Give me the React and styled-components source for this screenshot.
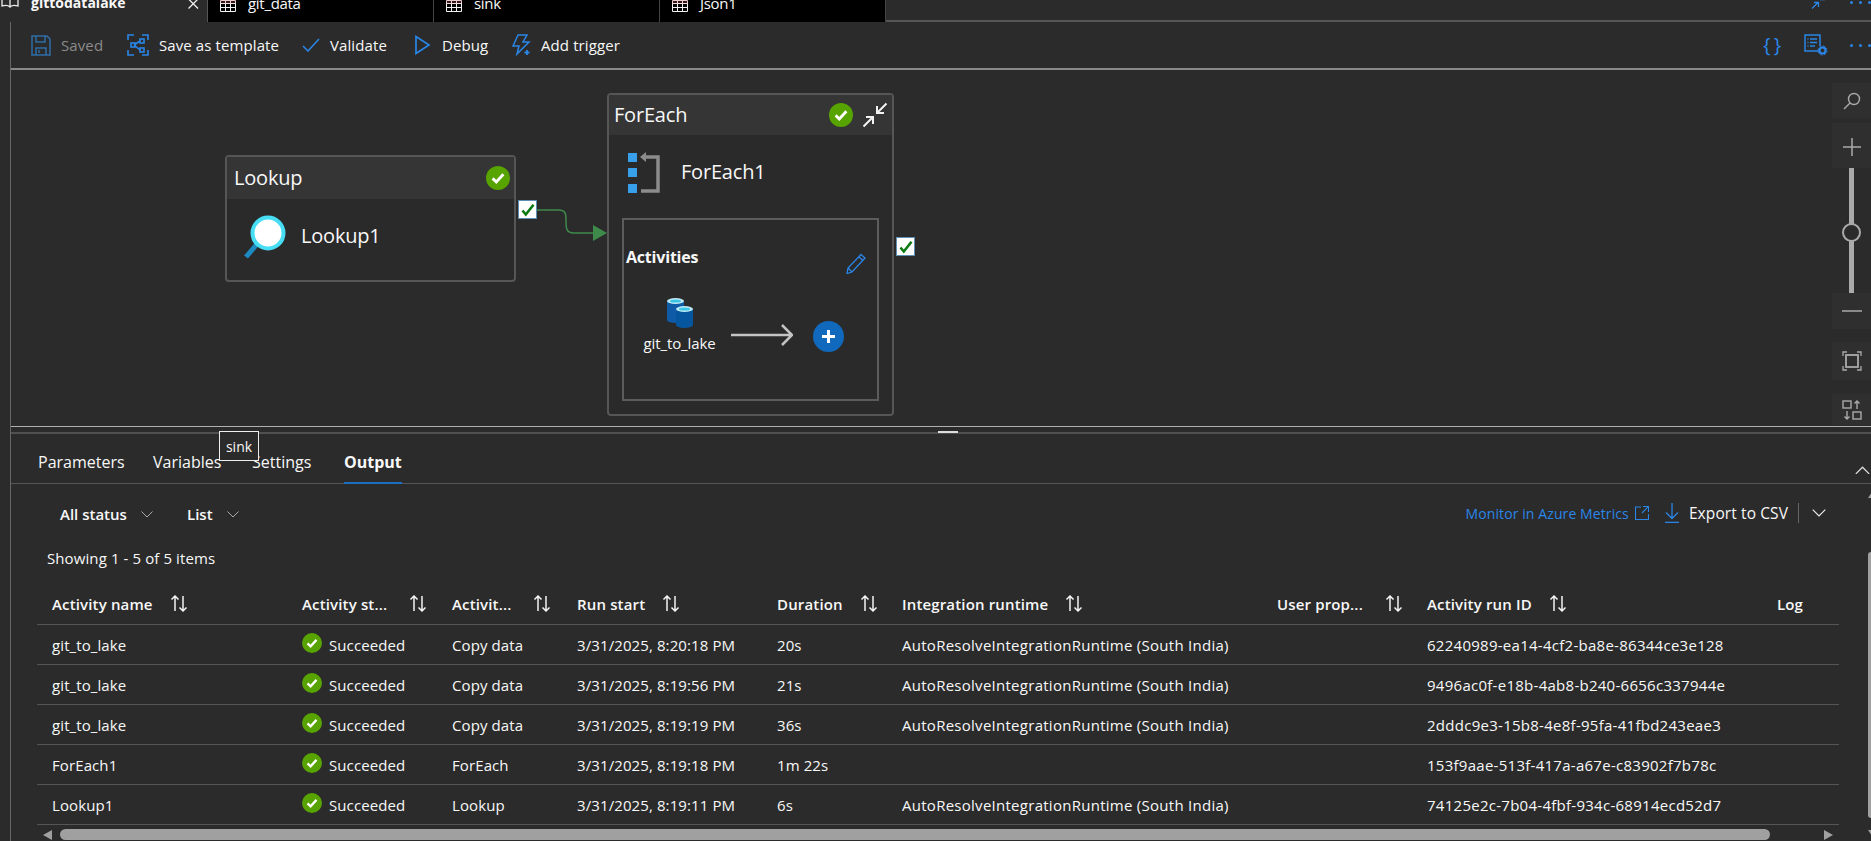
import React from 'react';
import styled, {createGlobalStyle} from 'styled-components';

const BLUE = '#2a86e8';

const GlobalStyle = createGlobalStyle`
  html, body {
    margin: 0;
    padding: 0;
    background: #2b2b2b;
  }
  body {
    font-family: "Open Sans", "Liberation Sans", sans-serif;
    font-size: 15px;
    letter-spacing: 0.1px;
    color: #f8f8f8;
  }
  * {
    box-sizing: border-box;
  }
`;

const rows = [
    {name: 'git_to_lake', type: 'Copy data', start: '3/31/2025, 8:20:18 PM', duration: '20s', runtime: true, id: '62240989-ea14-4cf2-ba8e-86344ce3e128'},
    {name: 'git_to_lake', type: 'Copy data', start: '3/31/2025, 8:19:56 PM', duration: '21s', runtime: true, id: '9496ac0f-e18b-4ab8-b240-6656c337944e'},
    {name: 'git_to_lake', type: 'Copy data', start: '3/31/2025, 8:19:19 PM', duration: '36s', runtime: true, id: '2dddc9e3-15b8-4e8f-95fa-41fbd243eae3'},
    {name: 'ForEach1', type: 'ForEach', start: '3/31/2025, 8:19:18 PM', duration: '1m 22s', runtime: false, id: '153f9aae-513f-417a-a67e-c83902f7b78c'},
    {name: 'Lookup1', type: 'Lookup', start: '3/31/2025, 8:19:11 PM', duration: '6s', runtime: true, id: '74125e2c-7b04-4fbf-934c-68914ecd52d7'},
];

const columns = [
    {label: 'Activity name', gap: 17},
    {label: 'Activity st...', gap: 22},
    {label: 'Activit...', gap: 22},
    {label: 'Run start', gap: 17},
    {label: 'Duration', gap: 17},
    {label: 'Integration runtime', gap: 17},
    {label: 'User prop...', gap: 22},
    {label: 'Activity run ID', gap: 17},
    {label: 'Log', sort: false},
];

const SuccessIcon = ({size = 20}) => (
    <svg width={size} height={size} viewBox="0 0 20 20">
        <circle cx="10" cy="10" r="10" fill="#57a300"/>
        <path d="M5.500 10.300l3.100 3 5.900-6.400" fill="none" stroke="#fff" strokeWidth="2.400"/>
    </svg>
);

const SortIcon = () => (
    <svg width="18" height="17" viewBox="0 0 18 17" fill="none" stroke="#f4f4f4" strokeWidth="1.500">
        <path d="M5 16V1M1.500 4.500L5 1l3.500 3.500M13 1v15M9.500 12.500L13 16l3.500-3.500"/>
    </svg>
);

const Chevron = ({size = 12, color = '#aaa', up}) => (
    <svg width={size} height={size / 2 + 1} viewBox="0 0 12 7" fill="none" stroke={color} strokeWidth="1">
        <path d={up ? 'M0.500 6.500L6 1l5.500 5.500' : 'M0.500 0.500L6 6l5.500-5.500'}/>
    </svg>
);

const TableIcon = () => (
    <svg width="16" height="12" viewBox="0 0 16 12" fill="none" stroke="#f2f2f2" strokeWidth="1">
        <path d="M0.500 0.500h15v11h-15zM0.500 3.500h15M0.500 7.500h15M5.500 0.500v11M10.500 0.500v11"/>
        <path d="M0 0h16v3.500H0z" fill="#d95f6e" stroke="none" opacity="0.25"/>
    </svg>
);

const ArrowCheck = () => (
    <svg width="14" height="14" viewBox="0 0 14 14">
        <path d="M1.500 7.500l3.300 4L12.500 1.800" fill="none" stroke="#0b7a12" strokeWidth="2.600"/>
    </svg>
);

const App = () => {
    return (
        <Page>
            <GlobalStyle/>
            <TabStrip>
                <ActiveTab>
                    <svg width="20" height="12" viewBox="0 0 20 12" fill="none" stroke="#eee" strokeWidth="1.300">
                        <path d="M2 0v8c3-1 6-1 8 1 2-2 5-2 8-1V0M10 0v9"/>
                    </svg>
                    <ActiveTabLabel>gittodatalake</ActiveTabLabel>
                    <svg width="11" height="11" viewBox="0 0 11 11" stroke="#eee" strokeWidth="1.300">
                        <path d="M0.500 0L10 9.500M10 0L0.500 9.500"/>
                    </svg>
                </ActiveTab>
                {['git_data', 'sink', 'Json1'].map(label => (
                    <Tab key={label}>
                        <TableIcon/>
                        <span>{label}</span>
                    </Tab>
                ))}
                <TabTools>
                    <svg width="14" height="10" viewBox="0 0 14 10" fill="none" stroke={BLUE} strokeWidth="1.300">
                        <path d="M1 9.500L7 3.500M3 3.500h4.500V8M9 0.500h5"/>
                    </svg>
                    <Dots $top><i/><i/><i/></Dots>
                </TabTools>
            </TabStrip>

            <Main>
                <Toolbar>
                    <ToolButton $w={96} $muted>
                        <svg width="20" height="21" viewBox="0 0 20 21" fill="none" stroke="#2f6ea8" strokeWidth="1.500">
                            <path d="M1 1h15l3 3v16H1zM5 1v6h9V1M5 20v-7h10v7M8 15v3"/>
                        </svg>
                        <span>Saved</span>
                    </ToolButton>
                    <ToolButton $w={175}>
                        <svg width="22" height="22" viewBox="0 0 22 22" fill="none" stroke={BLUE} strokeWidth="1.600">
                            <path d="M1 6V1h6M15 1h6v5M1 16v5h6M21 16v5h-6M7 11l6-4M7 11l6 5"/>
                            <rect x="4" y="9" width="4" height="4"/>
                            <rect x="13" y="5" width="4" height="4"/>
                            <rect x="13" y="14" width="4" height="4"/>
                        </svg>
                        <span>Save as template</span>
                    </ToolButton>
                    <ToolButton $w={111}>
                        <svg width="18" height="14" viewBox="0 0 18 14" fill="none" stroke={BLUE} strokeWidth="1.500">
                            <path d="M1 8l5 5L17 1"/>
                        </svg>
                        <span>Validate</span>
                    </ToolButton>
                    <ToolButton $w={99}>
                        <svg width="19" height="20" viewBox="0 0 19 20" fill="none" stroke={BLUE} strokeWidth="1.700">
                            <path d="M3 1.500v17L16 10z"/>
                        </svg>
                        <span>Debug</span>
                    </ToolButton>
                    <ToolButton $w={110}>
                        <svg width="19" height="22" viewBox="0 0 19 22" fill="none" stroke={BLUE} strokeWidth="1.500">
                            <path d="M6 1h9l-4 7h6L5 20l2-8H1z"/>
                            <path d="M15 16v5M12.500 18.500h5" strokeWidth="1.800"/>
                        </svg>
                        <span>Add trigger</span>
                    </ToolButton>
                    <ToolbarRight>
                        <CodeBraces>{'{ }'}</CodeBraces>
                        <svg width="25" height="22" viewBox="0 0 25 22" fill="none" stroke={BLUE} strokeWidth="1.500">
                            <path d="M15 17H1V1h15v11M3.500 5h1M6 5h7M3.500 8.500h1M6 8.500h7M3.500 12h1M6 12h5"/>
                            <circle cx="18.500" cy="16.500" r="3" strokeWidth="2"/>
                            <circle cx="18.500" cy="16.500" r="4.500" strokeWidth="1" strokeDasharray="2 1.500"/>
                        </svg>
                        <Dots><i/><i/><i/></Dots>
                    </ToolbarRight>
                </Toolbar>

                <Canvas>
                    <Connector width="75" height="40" viewBox="0 0 75 40">
                        <path d="M0 3h22c8 0 8 4 8 11s0 12 8 12h25" fill="none" stroke="#3e8a4b" strokeWidth="1.500"/>
                        <path d="M57 18l14 8-14 8z" fill="#3e8a4b"/>
                    </Connector>

                    <LookupNode>
                        <NodeHeader $h={42} $pl={7}>
                            <span>Lookup</span>
                            <HeaderIcons><SuccessIcon size={24}/></HeaderIcons>
                        </NodeHeader>
                        <LookupBody>
                            <svg width="44" height="44" viewBox="0 0 44 44" fill="none">
                                <path d="M15 29L4 42" stroke="#1d8ac0" strokeWidth="5"/>
                                <circle cx="26" cy="18" r="15.500" fill="#fff" stroke="#47def5" strokeWidth="4"/>
                            </svg>
                            <NodeName>Lookup1</NodeName>
                        </LookupBody>
                    </LookupNode>
                    <Check $left={507} $top={130}><ArrowCheck/></Check>

                    <ForEachNode>
                        <NodeHeader $h={40} $pl={5}>
                            <span>ForEach</span>
                            <HeaderIcons>
                                <SuccessIcon size={24}/>
                                <svg width="26" height="26" viewBox="0 0 26 26" fill="none" stroke="#f2f2f2" strokeWidth="2">
                                    <path d="M24.500 1.500L15 11M15 4v7h7M1.500 24.500L11 15M4 15h7v7"/>
                                </svg>
                            </HeaderIcons>
                        </NodeHeader>
                        <ForEachBody>
                            <svg width="32" height="42" viewBox="0 0 32 42">
                                <path d="M0 1h9v9H0zM0 16h9v9H0zM0 32h9v9H0z" fill="#38a0ea"/>
                                <path d="M13 39h17V5H16" fill="none" stroke="#8c8c8c" strokeWidth="3.500"/>
                                <path d="M12 5l6-5v10z" fill="#8c8c8c"/>
                            </svg>
                            <NodeName>ForEach1</NodeName>
                        </ForEachBody>
                        <ActivityBox>
                            <ActivityHead>
                                <ActivityTitle>Activities</ActivityTitle>
                                <PencilIcon width="20" height="21" viewBox="0 0 20 21" fill="none" stroke={BLUE} strokeWidth="1.300">
                                    <path d="M15 1.500l4 3.500L6 19l-5 1.500L2 15zM2 15l4 4M13 4l4 3.500"/>
                                </PencilIcon>
                            </ActivityHead>
                            <ActivityRow>
                                <ActivityItem>
                                    <svg width="26" height="30" viewBox="0 0 26 30">
                                        <path d="M0 3h17v19H0z" fill="#0f5ba8"/>
                                        <ellipse cx="8.500" cy="22" rx="8.500" ry="3" fill="#0f5ba8"/>
                                        <ellipse cx="8.500" cy="3" rx="8.500" ry="3" fill="#bfeaf5"/>
                                        <ellipse cx="8.500" cy="3" rx="5.500" ry="1.500" fill="#38c5e8"/>
                                        <path d="M9 11h17v16H9z" fill="#06569f"/>
                                        <ellipse cx="17.500" cy="27" rx="8.500" ry="3" fill="#06569f"/>
                                        <ellipse cx="17.500" cy="11" rx="8.500" ry="3" fill="#bfeaf5"/>
                                        <ellipse cx="17.500" cy="11" rx="5.500" ry="1.500" fill="#38c5e8"/>
                                    </svg>
                                    <span>git_to_lake</span>
                                </ActivityItem>
                                <LinkArrow width="62" height="24" viewBox="0 0 62 24" fill="none" stroke="#c4c4c4" strokeWidth="2.500">
                                    <path d="M0 12h60M51 2l10 10-10 10"/>
                                </LinkArrow>
                                <AddButton>
                                    <svg width="31" height="31" viewBox="0 0 31 31">
                                        <circle cx="15.500" cy="15.500" r="15.500" fill="#1069bd"/>
                                        <path d="M15.500 9v13M9 15.500h13" stroke="#fff" strokeWidth="3"/>
                                    </svg>
                                </AddButton>
                            </ActivityRow>
                        </ActivityBox>
                    </ForEachNode>
                    <Check $left={885} $top={167}><ArrowCheck/></Check>

                    <ZoomRail>
                        <RailButton $h={35} $mb={5}>
                            <svg width="18" height="18" viewBox="0 0 18 18" fill="none" stroke="#aaa" strokeWidth="1.400">
                                <circle cx="11" cy="7" r="5.500"/>
                                <path d="M7 11L1 17"/>
                            </svg>
                        </RailButton>
                        <PlusButton $h={45}>
                            <svg width="20" height="20" viewBox="0 0 20 20" stroke="#aaa" strokeWidth="1.500">
                                <path d="M10 1v18M1 10h18"/>
                            </svg>
                        </PlusButton>
                        <SliderTrack>
                            <SliderKnob/>
                        </SliderTrack>
                        <RailButton $h={36} $mb={13}>
                            <svg width="20" height="2" viewBox="0 0 20 2" stroke="#aaa" strokeWidth="1.500">
                                <path d="M0 1h20"/>
                            </svg>
                        </RailButton>
                        <RailButton $h={38} $mb={14}>
                            <svg width="20" height="20" viewBox="0 0 20 20" fill="none" stroke="#aaa" strokeWidth="1.300">
                                <path d="M1 5V1h4M15 1h4v4M1 15v4h4M19 15v4h-4"/>
                                <rect x="4" y="4" width="12" height="12" strokeWidth="1.800"/>
                            </svg>
                        </RailButton>
                        <RailButton $h={31}>
                            <svg width="20" height="20" viewBox="0 0 20 20" fill="none" stroke="#aaa" strokeWidth="1.400">
                                <rect x="1" y="1" width="8" height="7"/>
                                <rect x="11" y="12" width="8" height="7"/>
                                <path d="M15 9V1M12.500 3.500L15 1l2.500 2.500M5 11v8M2.500 16.500L5 19l2.500-2.500"/>
                            </svg>
                        </RailButton>
                    </ZoomRail>
                </Canvas>

                <Splitter>
                    <SplitterHandle/>
                </Splitter>

                <PanelTabs>
                    <PanelTab $w={115}>Parameters</PanelTab>
                    <PanelTab $w={99}>Variables</PanelTab>
                    <PanelTab $w={92}>Settings</PanelTab>
                    <PanelTab $w={58} $active>Output</PanelTab>
                    <CollapseButton>
                        <Chevron size={15} color="#ddd" up/>
                    </CollapseButton>
                </PanelTabs>

                <FilterRow>
                    <Filter $w={127}>
                        <span>All status</span>
                        <Chevron/>
                    </Filter>
                    <Filter>
                        <span>List</span>
                        <Chevron/>
                    </Filter>
                    <FilterActions>
                        <MetricsLink>
                            Monitor in Azure Metrics
                            <svg width="14" height="14" viewBox="0 0 14 14" fill="none" stroke={BLUE} strokeWidth="1.100">
                                <path d="M6 1H0.500v12.500h13V8M8 0.500h5.500V6M13.500 0.500L7 7"/>
                            </svg>
                        </MetricsLink>
                        <ExportButton>
                            <svg width="14" height="20" viewBox="0 0 14 20" fill="none" stroke={BLUE} strokeWidth="1.300">
                                <path d="M7 0v15M1 9.500L7 15.500l6-6M0 19.500h14"/>
                            </svg>
                            <span>Export to CSV</span>
                        </ExportButton>
                        <Divider/>
                        <Chevron size={14} color="#eee"/>
                    </FilterActions>
                </FilterRow>

                <ItemCount>Showing 1 - 5 of 5 items</ItemCount>

                <Table>
                    <HeaderRow>
                        {columns.map(col => (
                            <HeaderCell key={col.label} $gap={col.gap}>
                                <span>{col.label}</span>
                                {col.sort !== false && <SortIcon/>}
                            </HeaderCell>
                        ))}
                    </HeaderRow>
                    {rows.map(row => (
                        <Row key={row.id}>
                            <Cell>{row.name}</Cell>
                            <StatusCell>
                                <SuccessIcon/>
                                <span>Succeeded</span>
                            </StatusCell>
                            <Cell>{row.type}</Cell>
                            <Cell>{row.start}</Cell>
                            <Cell>{row.duration}</Cell>
                            <Cell $wide>{row.runtime ? 'AutoResolveIntegrationRuntime (South India)' : ''}</Cell>
                            <Cell/>
                            <Cell $wide>{row.id}</Cell>
                            <Cell/>
                        </Row>
                    ))}
                </Table>

                <HScroll>
                    <ArrowLeft/>
                    <HThumb/>
                    <ArrowRight/>
                </HScroll>

                <VScroll>
                    <ArrowUp/>
                    <VThumb/>
                    <ArrowDown/>
                </VScroll>

                <Tooltip>sink</Tooltip>
            </Main>
        </Page>
    )
}

const Page = styled.div`
  width: 1871px;
  height: 841px;
  overflow: hidden;
  background: #2b2b2b;
`;

const TabStrip = styled.div`
  display: flex;
  height: 22px;
  border-bottom: 2px solid #555;
  font-size: 15px;
  letter-spacing: -0.3px;
`;

const ActiveTab = styled.div`
  width: 208px;
  height: 22px;
  flex: none;
  display: flex;
  align-items: center;
  line-height: 6px;
  background: #2b2b2b;
  border-right: 1px solid #555;

  svg:first-child {
    margin-top: -14px;
  }

  svg:last-child {
    margin: -14px 0 0 47px;
  }
`;

const ActiveTabLabel = styled.span`
  width: 110px;
  margin: -16px 0 0 11px;
  font-size: 14px;
  font-weight: 700;
  letter-spacing: 0;
  white-space: nowrap;
`;

const Tab = styled.div`
  width: 226px;
  height: 22px;
  flex: none;
  display: flex;
  align-items: flex-start;
  gap: 12px;
  padding: 0 0 0 12px;
  background: #000;
  border-right: 1px solid #444;
  line-height: 6px;

  &:last-of-type {
    border-right: 0;
  }
`;

const TabTools = styled.div`
  margin-left: auto;
  display: flex;
  align-items: flex-start;
  gap: 25px;

  svg {
    margin-top: -1px;
  }
`;

const Dots = styled.div`
  display: flex;
  gap: 6px;
  width: 21px;
  margin-top: ${p => p.$top ? '1px' : '0'};

  i {
    display: block;
    flex: none;
    width: 3px;
    height: 3px;
    border-radius: 50%;
    background: ${BLUE};
  }
`;

const Main = styled.div`
  position: relative;
  margin-left: 10px;
  height: 819px;
  border-left: 1px solid #666;
`;

const Toolbar = styled.div`
  height: 46px;
  display: flex;
  align-items: center;
  padding-left: 20px;
`;

const ToolButton = styled.div`
  width: ${p => p.$w}px;
  flex: none;
  display: flex;
  align-items: center;
  gap: 10px;
  color: ${p => p.$muted ? '#8a8a8a' : '#f8f8f8'};
  white-space: nowrap;
`;

const ToolbarRight = styled.div`
  margin-left: auto;
  display: flex;
  align-items: center;
  gap: 21px;
`;

const CodeBraces = styled.span`
  width: 20px;
  font-size: 20px;
  line-height: 22px;
  color: ${BLUE};
  white-space: nowrap;
  letter-spacing: -1px;
`;

const Canvas = styled.div`
  position: relative;
  height: 359px;
  border-top: 2px solid #8a8a8a;
  border-bottom: 1px solid #b0b0b0;
`;

const Connector = styled.svg`
  position: absolute;
  left: 525px;
  top: 137px;
`;

const NodeBox = styled.div`
  position: absolute;
  display: flex;
  flex-direction: column;
  background: #2a2a2a;
  border: 2px solid #565656;
  border-radius: 4px;
  letter-spacing: -0.2px;
`;

const LookupNode = styled(NodeBox)`
  left: 214px;
  top: 85px;
  width: 291px;
  height: 127px;
`;

const ForEachNode = styled(NodeBox)`
  left: 596px;
  top: 23px;
  width: 287px;
  height: 323px;
`;

const NodeHeader = styled.div`
  height: ${p => p.$h}px;
  flex: none;
  display: flex;
  align-items: center;
  justify-content: space-between;
  padding: 0 4px 0 ${p => p.$pl}px;
  background: #353535;
  font-size: 20px;

  > span {
    margin-top: -2px;
  }
`;

const HeaderIcons = styled.div`
  display: flex;
  align-items: center;
  gap: 9px;
`;

const LookupBody = styled.div`
  display: flex;
  align-items: center;
  gap: 15px;
  padding: 16px 0 0 15px;
`;

const ForEachBody = styled.div`
  display: flex;
  align-items: center;
  gap: 21px;
  padding: 17px 0 0 19px;
`;

const NodeName = styled.span`
  margin-top: -4px;
  font-size: 20px;
`;

const ActivityBox = styled.div`
  height: 183px;
  margin: 24px 13px 0 13px;
  border: 2px solid #5c5c5c;
`;

const ActivityHead = styled.div`
  display: flex;
  align-items: flex-start;
  justify-content: space-between;
  padding: 26px 11px 0 2px;
  height: 56px;
`;

const ActivityTitle = styled.span`
  font-size: 16px;
  font-weight: 700;
`;

const PencilIcon = styled.svg`
  margin-top: 7px;
`;

const ActivityRow = styled.div`
  display: flex;
  align-items: flex-start;
  margin-top: 22px;
  padding-left: 19px;
  gap: 15px;
`;

const ActivityItem = styled.div`
  display: flex;
  flex-direction: column;
  align-items: center;
  gap: 5px;
  width: 73px;
  white-space: nowrap;
  letter-spacing: -0.1px;
`;

const LinkArrow = styled.svg`
  margin-top: 25px;
`;

const AddButton = styled.div`
  margin: 23px 0 0 5px;
  width: 31px;
  height: 31px;
`;

const Check = styled.div`
  position: absolute;
  left: ${p => p.$left}px;
  top: ${p => p.$top}px;
  width: 19px;
  height: 19px;
  display: flex;
  align-items: center;
  justify-content: center;
  background: #fff;
  border: 1px solid #5d8fb5;
`;

const ZoomRail = styled.div`
  position: absolute;
  right: 0;
  top: 13px;
  width: 39px;
  display: flex;
  flex-direction: column;
  align-items: center;
`;

const RailButton = styled.div`
  width: 39px;
  height: ${p => p.$h}px;
  margin-bottom: ${p => p.$mb || 0}px;
  display: flex;
  align-items: center;
  justify-content: center;
  background: #2f2f2f;
`;

const PlusButton = styled(RailButton)`
  padding-top: 3px;
`;

const SliderTrack = styled.div`
  position: relative;
  width: 5px;
  height: 125px;
  background: #aaa;
`;

const SliderKnob = styled.div`
  position: absolute;
  left: -7px;
  top: 55px;
  width: 19px;
  height: 19px;
  border-radius: 50%;
  background: #2b2b2b;
  border: 2px solid #aaa;
`;

const Splitter = styled.div`
  position: relative;
  height: 7px;
  border-bottom: 2px solid #505050;
`;

const SplitterHandle = styled.div`
  position: absolute;
  left: 927px;
  top: 4px;
  width: 20px;
  height: 2px;
  background: #ddd;
`;

const PanelTabs = styled.div`
  position: relative;
  height: 50px;
  display: flex;
  padding-left: 27px;
  border-bottom: 1px solid #555;
  letter-spacing: 0;
`;

const PanelTab = styled.div`
  position: relative;
  width: ${p => p.$w}px;
  flex: none;
  font-size: 16px;
  line-height: 56px;
  font-weight: ${p => p.$active ? 700 : 400};
  white-space: nowrap;

  &::after {
    content: "";
    display: ${p => p.$active ? 'block' : 'none'};
    position: absolute;
    left: 0;
    right: 0;
    bottom: -1px;
    height: 2px;
    background: #1a6fc0;
  }
`;

const CollapseButton = styled.div`
  margin-left: auto;
  padding: 24px 1px 0 0;
`;

const FilterRow = styled.div`
  height: 62px;
  display: flex;
  align-items: center;
  padding: 0 0 2px 49px;
`;

const Filter = styled.div`
  width: ${p => p.$w ? `${p.$w}px` : 'auto'};
  display: flex;
  align-items: center;
  gap: 14px;
  font-weight: 600;
  letter-spacing: 0;
`;

const FilterActions = styled.div`
  margin-left: auto;
  padding: 0 45px 2px 0;
  display: flex;
  align-items: center;
`;

const MetricsLink = styled.div`
  display: flex;
  align-items: center;
  gap: 6px;
  font-size: 14px;
  color: ${BLUE};
`;

const ExportButton = styled.div`
  display: flex;
  align-items: center;
  gap: 10px;
  margin-left: 16px;
  font-size: 15.500px;
`;

const Divider = styled.div`
  width: 1px;
  height: 20px;
  margin: 0 13px 0 10px;
  background: #666;
`;

const ItemCount = styled.div`
  height: 24px;
  line-height: 24px;
  padding-left: 36px;
  margin-bottom: 15px;
`;

const Table = styled.div`
  margin: 0 32px 0 26px;
`;

const gridColumns = `
  display: grid;
  grid-template-columns: 250px 150px 125px 200px 125px 375px 150px 350px 77px;
  height: 40px;
  border-bottom: 1px solid #555;
`;

const HeaderRow = styled.div`
  ${gridColumns}
`;

const Row = styled.div`
  ${gridColumns}
`;

const HeaderCell = styled.div`
  display: flex;
  align-items: center;
  gap: ${p => p.$gap || 0}px;
  padding: 0 0 2px 15px;
  font-weight: 600;
  letter-spacing: 0.15px;
  white-space: nowrap;
`;

const Cell = styled.div`
  display: flex;
  align-items: center;
  padding-left: 15px;
  white-space: nowrap;
  letter-spacing: ${p => p.$wide ? '0.27px' : '0.1px'};
`;

const StatusCell = styled(Cell)`
  gap: 7px;

  svg {
    margin-top: -3px;
  }
`;

const HScroll = styled.div`
  display: flex;
  align-items: center;
  height: 11px;
  margin: 4px 0 0 32px;
`;

const ArrowLeft = styled.div`
  width: 0;
  height: 0;
  border-style: solid;
  border-width: 5.500px 9px 5.500px 0;
  border-color: transparent #a0a0a0 transparent transparent;
`;

const ArrowRight = styled.div`
  width: 0;
  height: 0;
  margin-left: 54px;
  border-style: solid;
  border-width: 5.500px 0 5.500px 9px;
  border-color: transparent transparent transparent #a0a0a0;
`;

const HThumb = styled.div`
  width: 1710px;
  height: 11px;
  margin-left: 8px;
  border-radius: 6px;
  background: #a0a0a0;
`;

const VScroll = styled.div`
  position: absolute;
  right: 0;
  top: 470px;
  width: 3px;
  height: 350px;
  display: flex;
  flex-direction: column;
`;

const ArrowUp = styled.div`
  width: 0;
  height: 0;
  margin-bottom: 54px;
  border-style: solid;
  border-width: 0 0 6px 4px;
  border-color: transparent transparent #a0a0a0 transparent;
`;

const VThumb = styled.div`
  width: 3px;
  height: 266px;
  border-radius: 3px 0 0 3px;
  background: #a0a0a0;
`;

const ArrowDown = styled.div`
  width: 0;
  height: 0;
  margin-top: 12px;
  border-style: solid;
  border-width: 6px 0 0 4px;
  border-color: #a0a0a0 transparent transparent transparent;
`;

const Tooltip = styled.div`
  position: absolute;
  left: 208px;
  top: 409px;
  width: 40px;
  height: 30px;
  display: flex;
  align-items: center;
  justify-content: center;
  background: #2b2b2b;
  border: 1px solid #eee;
  font-size: 14px;
  letter-spacing: 0;
`;

export default App;
